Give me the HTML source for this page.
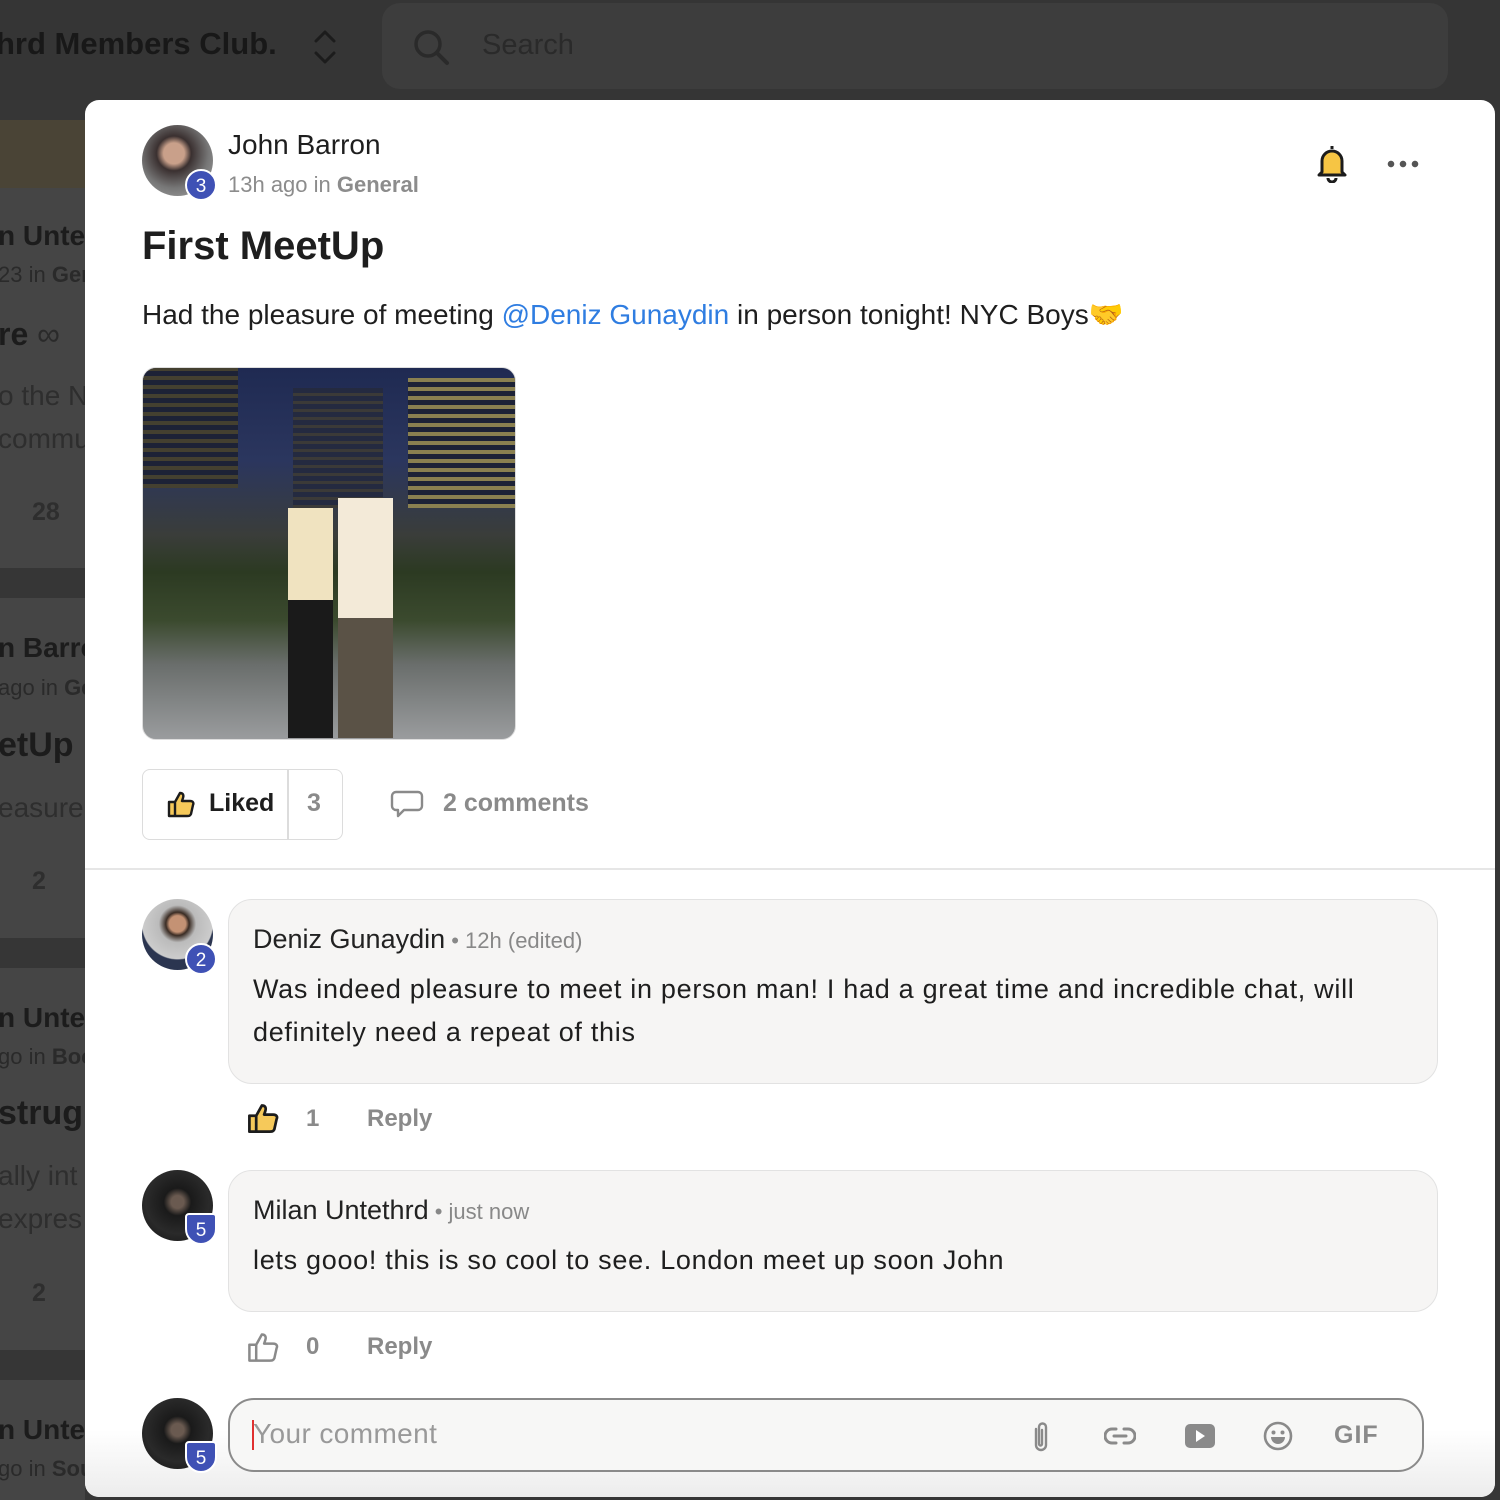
<!DOCTYPE html>
<html><head><meta charset="utf-8"><style>
*{box-sizing:border-box;margin:0;padding:0}
body{width:1500px;height:1500px;overflow:hidden;background:#363636;font-family:"Liberation Sans",Roboto,sans-serif;position:relative}
.abs{position:absolute}
.feed{left:0;width:85px;background:#454545}
.ft{color:#1c1c1c;font-weight:bold;white-space:nowrap;position:absolute}
.fg{color:#2e2e2e;white-space:nowrap;position:absolute}
.modal{left:85px;top:100px;width:1410px;height:1397px;background:#fff;border-radius:14px;overflow:hidden}
.av{border-radius:50%;position:absolute}
.badge{position:absolute;width:32px;height:32px;border-radius:50%;background:#3f51b5;color:#fff;font-size:19px;text-align:center;line-height:32px;border:2px solid #fff}
.bubble{position:absolute;background:#f6f5f4;border:1.5px solid #e2e2e2;border-radius:24px}
.name{font-size:27px;color:#222}
.meta{font-size:22px;color:#888}
.ct{font-size:27px;color:#1e1e1e;line-height:43px;letter-spacing:0.7px}
.act{position:absolute;font-size:24px;font-weight:bold;color:#8a8a8a}
</style></head><body>
<div class="abs" style="left:0;top:0;width:1500px;height:100px;background:#353535"></div>
<div class="abs" style="left:-4px;top:26px;font-size:31px;font-weight:bold;color:#181818;white-space:nowrap">hrd Members Club.</div>
<svg class="abs" style="left:312px;top:28px" width="26" height="38" viewBox="0 0 26 38"><path d="M4 13l9-9 9 9M4 25l9 9 9-9" fill="none" stroke="#1c1c1c" stroke-width="3" stroke-linecap="round" stroke-linejoin="round"/></svg>
<div class="abs" style="left:382px;top:3px;width:1066px;height:86px;border-radius:18px;background:#3d3d3d"></div>
<svg class="abs" style="left:412px;top:28px" width="40" height="40" viewBox="0 0 40 40"><circle cx="16" cy="16" r="12" fill="none" stroke="#2a2a2a" stroke-width="3.5"/><path d="M25 25l10 10" stroke="#2a2a2a" stroke-width="4" stroke-linecap="round"/></svg>
<div class="abs" style="left:482px;top:29px;font-size:29px;color:#2a2a2a">Search</div>
<div class="abs feed" style="top:120px;height:448px"></div>
<div class="abs" style="left:0;top:120px;width:85px;height:68px;background:#4a4436"></div>
<div class="abs feed" style="top:598px;height:340px"></div>
<div class="abs feed" style="top:968px;height:382px"></div>
<div class="abs feed" style="top:1380px;height:120px"></div>
<div class="ft" style="left:-2px;top:220px;font-size:28px">n Unte</div>
<div class="fg" style="left:-2px;top:262px;font-size:22px;color:#2a2a2a">23 in <b>Ger</b></div>
<div class="ft" style="left:-2px;top:316px;font-size:32px">re <span style="font-weight:normal;color:#2a2a2a">∞</span></div>
<div class="fg" style="left:-2px;top:380px;font-size:28px">o the N</div>
<div class="fg" style="left:-2px;top:423px;font-size:28px">commu</div>
<div class="fg" style="left:32px;top:498px;font-size:25px;font-weight:bold">28</div>
<div class="ft" style="left:-2px;top:632px;font-size:28px">n Barro</div>
<div class="fg" style="left:-2px;top:675px;font-size:22px;color:#2a2a2a">ago in <b>Ge</b></div>
<div class="ft" style="left:-2px;top:726px;font-size:34px">etUp</div>
<div class="fg" style="left:-2px;top:792px;font-size:28px">easure</div>
<div class="fg" style="left:32px;top:867px;font-size:25px;font-weight:bold">2</div>
<div class="ft" style="left:-2px;top:1002px;font-size:28px">n Unte</div>
<div class="fg" style="left:-2px;top:1044px;font-size:22px;color:#2a2a2a">go in <b>Boc</b></div>
<div class="ft" style="left:-2px;top:1094px;font-size:34px">strug</div>
<div class="fg" style="left:-2px;top:1160px;font-size:28px">ally int</div>
<div class="fg" style="left:-2px;top:1203px;font-size:28px">expres</div>
<div class="fg" style="left:32px;top:1279px;font-size:25px;font-weight:bold">2</div>
<div class="ft" style="left:-2px;top:1414px;font-size:28px">n Unte</div>
<div class="fg" style="left:-2px;top:1456px;font-size:22px;color:#2a2a2a">go in <b>Sou</b></div>

<div class="abs modal">
 <div class="av" style="left:57px;top:25px;width:71px;height:71px;background:radial-gradient(circle at 45% 40%,#c9a08a 0 18%,#3a3030 30%,#777 60%,#aaa)"></div>
 <div class="badge" style="left:100px;top:69px">3</div>
 <div class="abs" style="left:143px;top:29px;font-size:28px;color:#1e1e1e">John Barron</div>
 <div class="abs" style="left:143px;top:72px;font-size:22px;color:#8c8c8c">13h ago in <b>General</b></div>
 <svg class="abs" style="left:1230px;top:43px" width="34" height="40" viewBox="0 0 34 40"><path d="M17 3v3M7 29V18a10 10 0 0120 0v11l3 3H4z" fill="#f6c544" stroke="#1c1c1c" stroke-width="3" stroke-linejoin="round"/><path d="M13 35a4 4 0 008 0" fill="none" stroke="#1c1c1c" stroke-width="3"/></svg>
 <div class="abs" style="left:1302px;top:60px;width:32px;height:8px;background:radial-gradient(circle at 4px 4px,#555 3px,transparent 3.5px) 0 0/12px 8px"></div>
 <div class="abs" style="left:57px;top:124px;font-size:40px;font-weight:bold;color:#1e1e1e">First MeetUp</div>
 <div class="abs" style="left:57px;top:198px;font-size:28px;color:#1e1e1e;white-space:nowrap">Had the pleasure of meeting <span style="color:#2f7de1">@Deniz Gunaydin</span> in person tonight! NYC Boys🤝</div>
 <div class="abs" style="left:57px;top:267px;width:374px;height:373px;border-radius:14px;overflow:hidden;border:1px solid #ddd;background:linear-gradient(180deg,#1f2a52 0%,#2b365e 25%,#3a3d3a 45%,#2c3a22 55%,#3b4a2e 68%,#6a6e6c 80%,#9a9c9e 100%)">
  <div class="abs" style="left:0;top:0;width:95px;height:120px;background:repeating-linear-gradient(0deg,#444030 0 4px,#1d2236 4px 9px)"></div>
  <div class="abs" style="left:265px;top:10px;width:110px;height:130px;background:repeating-linear-gradient(0deg,#8a8050 0 4px,#1d2236 4px 9px)"></div>
  <div class="abs" style="left:150px;top:20px;width:90px;height:120px;background:repeating-linear-gradient(0deg,#3b3a38 0 3px,#242a40 3px 8px)"></div>
  <div class="abs" style="left:145px;top:140px;width:45px;height:230px;background:linear-gradient(#f0e3c0 0 40%,#1a1a1a 40%)"></div>
  <div class="abs" style="left:195px;top:130px;width:55px;height:240px;background:linear-gradient(#f3ead8 0 50%,#5a5246 50%)"></div>
 </div>
 <div class="abs" style="left:57px;top:669px;width:201px;height:71px;border:1.5px solid #dcdcdc;border-radius:8px"></div>
 <div class="abs" style="left:202px;top:670px;width:1.5px;height:69px;background:#dcdcdc"></div>
 <svg class="abs" style="left:81px;top:689px" width="30" height="30" viewBox="0 0 30 30"><path d="M3 13h6v14H3zM9 13l5-9c3 0 4 2 3 5l-1 3h8c3 0 4 2 3 4l-2 9c-1 2-2 2-4 2H9z" fill="#f6c95a" stroke="#1c1c1c" stroke-width="2.4" stroke-linejoin="round"/></svg>
 <div class="abs" style="left:124px;top:689px;font-size:25px;font-weight:bold;color:#1e1e1e">Liked</div>
 <div class="abs" style="left:222px;top:689px;font-size:25px;font-weight:bold;color:#8a8a8a">3</div>
 <svg class="abs" style="left:305px;top:689px" width="34" height="30" viewBox="0 0 34 30"><path d="M6 3h22a4 4 0 014 4v10a4 4 0 01-4 4H14l-6 6v-6H6a4 4 0 01-4-4V7a4 4 0 014-4z" fill="none" stroke="#8a8a8a" stroke-width="2.4" stroke-linejoin="round"/></svg>
 <div class="abs" style="left:358px;top:689px;font-size:25px;font-weight:bold;color:#8a8a8a">2 comments</div>
 <div class="abs" style="left:0;top:768px;width:1410px;height:2px;background:#e6e6e6"></div>

 <div class="av" style="left:57px;top:799px;width:71px;height:71px;background:radial-gradient(circle at 50% 35%,#c49274 0 14%,#3a2c24 20%,#bbb 32%,#ccc 60%,#2b3550 62%)"></div>
 <div class="badge" style="left:100px;top:843px">2</div>
 <div class="bubble" style="left:143px;top:799px;width:1210px;height:185px"></div>
 <div class="abs" style="left:168px;top:824px;white-space:nowrap"><span class="name">Deniz Gunaydin</span><span class="meta"> • 12h (edited)</span></div>
 <div class="abs ct" style="left:168px;top:868px;width:1170px">Was indeed pleasure to meet in person man! I had a great time and incredible chat, will definitely need a repeat of this</div>
 <svg class="abs" style="left:161px;top:1001px" width="34" height="34" viewBox="0 0 30 30"><path d="M3 13h6v14H3zM9 13l5-9c3 0 4 2 3 5l-1 3h8c3 0 4 2 3 4l-2 9c-1 2-2 2-4 2H9z" fill="#f6c95a" stroke="#1c1c1c" stroke-width="2.4" stroke-linejoin="round"/></svg>
 <div class="act" style="left:221px;top:1005px">1</div>
 <div class="act" style="left:282px;top:1005px">Reply</div>

 <div class="av" style="left:57px;top:1070px;width:71px;height:71px;background:radial-gradient(circle at 50% 45%,#6a5a50 0 12%,#1a1a1a 26%,#2a2a2a 60%,#111)"></div>
 <div class="badge" style="left:100px;top:1113px;border-radius:4px 4px 16px 16px">5</div>
 <div class="bubble" style="left:143px;top:1070px;width:1210px;height:142px"></div>
 <div class="abs" style="left:168px;top:1095px;white-space:nowrap"><span class="name">Milan Untethrd</span><span class="meta"> • just now</span></div>
 <div class="abs ct" style="left:168px;top:1139px;white-space:nowrap">lets gooo! this is so cool to see. London meet up soon John</div>
 <svg class="abs" style="left:161px;top:1230px" width="34" height="34" viewBox="0 0 30 30"><path d="M3 13h6v14H3zM9 13l5-9c3 0 4 2 3 5l-1 3h8c3 0 4 2 3 4l-2 9c-1 2-2 2-4 2H9z" fill="none" stroke="#8a8a8a" stroke-width="2.2" stroke-linejoin="round"/></svg>
 <div class="act" style="left:221px;top:1233px">0</div>
 <div class="act" style="left:282px;top:1233px">Reply</div>

 <div class="abs" style="left:0;top:1330px;width:1410px;height:67px;background:linear-gradient(#fff,#ececec)"></div>
 <div class="av" style="left:57px;top:1298px;width:71px;height:71px;background:radial-gradient(circle at 50% 45%,#6a5a50 0 12%,#1a1a1a 26%,#2a2a2a 60%,#111)"></div>
 <div class="badge" style="left:100px;top:1341px;border-radius:4px 4px 16px 16px">5</div>
 <div class="abs" style="left:143px;top:1298px;width:1196px;height:74px;border:2px solid #8a8a8a;border-radius:26px;background:#f7f7f6"></div>
 <div class="abs" style="left:167px;top:1320px;width:2px;height:30px;background:#e03030"></div>
 <div class="abs" style="left:168px;top:1318px;font-size:28px;color:#999;letter-spacing:0.4px">Your comment</div>
 <svg class="abs" style="left:944px;top:1320px" width="24" height="34" viewBox="0 0 24 34"><path d="M7 9v16a5 5 0 0010 0V7a3.5 3.5 0 00-7 0v17a1.5 1.5 0 003 0V10" fill="none" stroke="#8a8a8a" stroke-width="2.4" stroke-linecap="round"/></svg>
 <svg class="abs" style="left:1019px;top:1326px" width="32" height="20" viewBox="0 0 32 20"><path d="M12 3H8a7 7 0 000 14h4M20 3h4a7 7 0 010 14h-4M10 10h12" fill="none" stroke="#8a8a8a" stroke-width="3" stroke-linecap="round"/></svg>
 <svg class="abs" style="left:1099px;top:1323px" width="32" height="26" viewBox="0 0 32 26"><rect x="1" y="1" width="30" height="24" rx="5" fill="#8a8a8a"/><path d="M12 7l9 6-9 6z" fill="#fff"/></svg>
 <svg class="abs" style="left:1177px;top:1320px" width="32" height="32" viewBox="0 0 32 32"><circle cx="16" cy="16" r="13" fill="none" stroke="#8a8a8a" stroke-width="2.6"/><circle cx="11.5" cy="12.5" r="2" fill="#8a8a8a"/><circle cx="20.5" cy="12.5" r="2" fill="#8a8a8a"/><path d="M9 17h14a7 7 0 01-14 0z" fill="#8a8a8a"/></svg>
 <div class="abs" style="left:1249px;top:1321px;font-size:25px;font-weight:900;color:#8a8a8a;letter-spacing:1px">GIF</div>
</div>
</body></html>
